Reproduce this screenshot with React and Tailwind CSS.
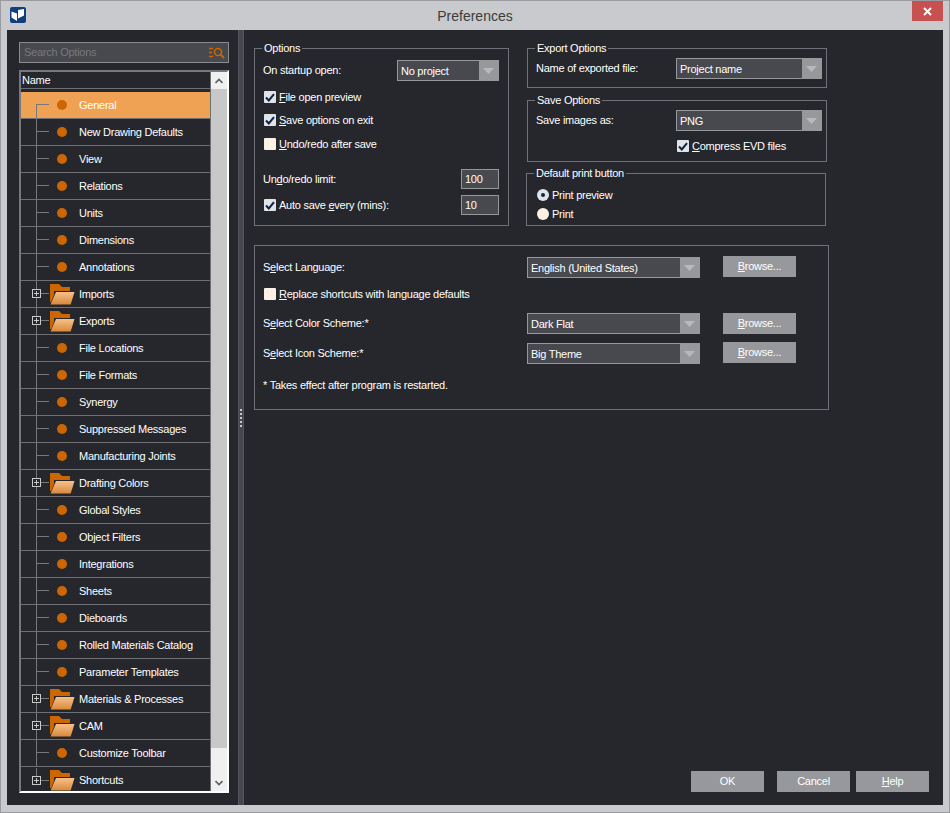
import React from 'react'

const font = "font-['Liberation_Sans',Arial,sans-serif] tracking-[-0.25px]"

const tree = [
  ['General', 'item'],
  ['New Drawing Defaults', 'item'],
  ['View', 'item'],
  ['Relations', 'item'],
  ['Units', 'item'],
  ['Dimensions', 'item'],
  ['Annotations', 'item'],
  ['Imports', 'folder'],
  ['Exports', 'folder'],
  ['File Locations', 'item'],
  ['File Formats', 'item'],
  ['Synergy', 'item'],
  ['Suppressed Messages', 'item'],
  ['Manufacturing Joints', 'item'],
  ['Drafting Colors', 'folder'],
  ['Global Styles', 'item'],
  ['Object Filters', 'item'],
  ['Integrations', 'item'],
  ['Sheets', 'item'],
  ['Dieboards', 'item'],
  ['Rolled Materials Catalog', 'item'],
  ['Parameter Templates', 'item'],
  ['Materials & Processes', 'folder'],
  ['CAM', 'folder'],
  ['Customize Toolbar', 'item'],
  ['Shortcuts', 'folder'],
]

function Connector({ first, last, folder }) {
  return (
    <svg width="30" height="26" className="shrink-0" shapeRendering="crispEdges">
      <line x1="15.5" x2="15.5" y1={first ? 13 : 0} y2={last ? 13 : 26} stroke="#77787c" />
      <line x1="15" x2="28" y1="12.5" y2="12.5" stroke="#77787c" />
      {folder && (
        <g>
          <rect x="11.5" y="8.5" width="8" height="8" fill="#26272c" stroke="#c9c9c9" />
          <line x1="13" x2="18" y1="12.5" y2="12.5" stroke="#c9c9c9" />
          <line x1="15.5" x2="15.5" y1="10" y2="15" stroke="#c9c9c9" />
        </g>
      )}
    </svg>
  )
}

function FolderIcon() {
  return (
    <svg width="25" height="21" viewBox="0 0 25 21" className="shrink-0">
      <defs>
        <linearGradient id="folderFront" x1="0" x2="0" y1="0" y2="1">
          <stop offset="0" stopColor="#f7c18a" />
          <stop offset="1" stopColor="#d9893c" />
        </linearGradient>
      </defs>
      <path d="M0 0h9l3 3h8v4H0z" fill="#cc6600" />
      <path d="M0 7h4v11H0z" fill="#cc6600" />
      <path d="M5.500 7H25l-4 14H0z" fill="#26272c" />
      <path d="M6 8H24.500l-3.800 12.500H0.500z" fill="url(#folderFront)" />
    </svg>
  )
}

function TreeRow({ label, kind, first, last }) {
  const folder = kind === 'folder'
  return (
    <div className={`flex h-[27px] shrink-0 items-center border-b border-[#6f7073] ${first ? 'bg-[#f0a254]' : ''} ${last ? 'border-b-0' : ''}`}>
      <Connector first={first} last={last} folder={folder} />
      <div className="flex w-[28px] shrink-0 items-center justify-center">
        {folder ? <span className="-ml-[5px]"><FolderIcon /></span> : <span className="-ml-[6px] h-[10px] w-[10px] rounded-full bg-[#cc6600]" />}
      </div>
      <span className="text-[11px] whitespace-nowrap text-white">{label}</span>
    </div>
  )
}

function Scrollbar() {
  return (
    <div className="flex w-[16px] shrink-0 flex-col bg-[#f0f0f0]">
      <div className="flex h-[17px] items-center justify-center">
        <svg width="8" height="6" viewBox="0 0 8 6"><path d="M0.500 5L4 1.500 7.500 5" fill="none" stroke="#606060" strokeWidth="1.600" /></svg>
      </div>
      <div className="h-[659px] bg-[#c8c8c8]" />
      <div className="mt-auto flex h-[17px] items-center justify-center">
        <svg width="8" height="6" viewBox="0 0 8 6"><path d="M0.500 1L4 4.500 7.500 1" fill="none" stroke="#606060" strokeWidth="1.600" /></svg>
      </div>
    </div>
  )
}

function Check({ checked }) {
  return (
    <span className={`flex h-[12px] w-[12px] shrink-0 items-center justify-center rounded-[1px] ${checked ? 'bg-[#dfe3ea]' : 'bg-[#fbf1e4]'}`}>
      {checked && (
        <svg width="10" height="9" viewBox="0 0 10 9"><path d="M1 4.500L3.800 7.500 9 1.200" fill="none" stroke="#12233f" strokeWidth="2" /></svg>
      )}
    </span>
  )
}

function Radio({ checked }) {
  return (
    <span className={`flex h-[12px] w-[12px] shrink-0 items-center justify-center rounded-full ${checked ? 'bg-[#dfe3ea]' : 'bg-[#fbf1e4]'}`}>
      {checked && <span className="h-[4px] w-[4px] rounded-full bg-[#12233f]" />}
    </span>
  )
}

function CheckRow({ checked, u, rest, className = '' }) {
  return (
    <label className={`flex h-[18px] items-center gap-[3px] text-[11px] text-white ${className}`}>
      <Check checked={checked} />
      <span><u>{u}</u>{rest}</span>
    </label>
  )
}

function Select({ value, className = '' }) {
  return (
    <div className={`flex h-[21px] border border-[#97989c] bg-[#48494f] ${className}`}>
      <span className="flex-1 pl-[3px] text-[11px] leading-[20px] text-white">{value}</span>
      <span className="flex w-[19px] items-center justify-center bg-[#97989c]">
        <svg width="11" height="6" viewBox="0 0 11 6"><path d="M0 0h11L5.500 6z" fill="#b8b9bc" /></svg>
      </span>
    </div>
  )
}

function Input({ value }) {
  return (
    <div className="h-[20px] w-[38px] border border-[#97989c] bg-[#48494f] pl-[3px] text-[11px] leading-[18px] text-white">{value}</div>
  )
}

function Group({ title, className = '', children }) {
  return (
    <fieldset className={`border border-[#6f7078] ${className}`}>
      <legend className="ml-[7px] px-[2px] text-[11px] leading-[14px] text-white">{title}</legend>
      {children}
    </fieldset>
  )
}

function Btn({ children, className = '' }) {
  return (
    <button className={`h-[21px] w-[73px] bg-[#97989c] text-center text-[11px] text-white ${className}`}>{children}</button>
  )
}

export default function App() {
  return (
    <div className={`flex h-[813px] w-[950px] flex-col border border-[#9a9b9f] bg-[#c9cacd] ${font}`}>
      {/* Title bar */}
      <div className="relative flex h-[29px] shrink-0 items-center justify-center">
        <svg width="16" height="16" viewBox="0 0 16 16" className="absolute top-[6px] left-[9px]">
          <rect width="16" height="16" rx="2" fill="#0f3f7c" />
          <path d="M1.500 4.500L7 6.500V14L1.500 10.500z" fill="#fff" />
          <path d="M8 3L14 2V8.500L8 11.500z" fill="#fff" />
        </svg>
        <span className="mt-[1px] text-[14px] tracking-normal text-[#3c3c3c]">Preferences</span>
        <button className="absolute top-0 right-[6px] flex h-[20px] w-[31px] items-center justify-center bg-[#c75050]">
          <svg width="9" height="9" viewBox="0 0 9 9"><path d="M1 1l7 7M8 1L1 8" stroke="#fff" strokeWidth="2" /></svg>
        </button>
      </div>

      {/* Body */}
      <div className="mx-[6px] flex min-h-0 flex-1 bg-[#26272c]">
        {/* Left panel */}
        <div className="flex w-[231px] shrink-0 flex-col pt-[12px] pl-[12px]">
          <div className="flex h-[21px] w-[210px] items-center justify-between border border-[#8a8b8f] bg-[#48494f] pr-[3px] pl-[4px]">
            <span className="text-[11px] text-[#77787d]">Search Options</span>
            <svg width="16" height="12" viewBox="0 0 16 12" fill="none" stroke="#cc6600">
              <path d="M0 1.500h4M0 5.500h3M0 9.500h4" strokeWidth="1.600" />
              <circle cx="9" cy="5" r="3.500" strokeWidth="1.600" />
              <path d="M11.500 7.500L15 11" strokeWidth="2" />
            </svg>
          </div>
          <div className="mt-[7px] flex h-[723px] w-[210px] border-2 border-t-[#77787c] border-r-white border-b-white border-l-[#77787c]">
            <div className="flex min-w-0 flex-1 flex-col overflow-hidden border-r border-[#6f7073]">
              <div className="h-[17px] shrink-0 border-b border-[#6f7073] pl-[1px] text-[11px] leading-[16px] text-white">Name</div>
              <div className="mt-[3px] flex flex-col">
                {tree.map(([label, kind], i) => (
                  <TreeRow key={label} label={label} kind={kind} first={i === 0} last={i === tree.length - 1} />
                ))}
              </div>
            </div>
            <Scrollbar />
          </div>
        </div>

        {/* Splitter */}
        <div className="flex w-[6px] shrink-0 flex-col items-center justify-center gap-[2px] border-x border-[#55565f] bg-[#45464e]">
          {[0, 1, 2, 3, 4].map((d) => (
            <span key={d} className="h-[2px] w-[2px] bg-[#c8c8c8]" />
          ))}
        </div>

        {/* Right panel */}
        <div className="flex min-w-0 flex-1 flex-col pt-[11px] pr-[14px] pl-[10px]">
          <div className="flex gap-[18px]">
            <Group title="Options" className="h-[185px] w-[255px]">
              <div className="px-[8px] pt-[5px]">
                <div className="flex h-[21px] items-center justify-between pr-[1px] text-[11px] text-white">
                  <span>On startup open:</span>
                  <Select value="No project" className="w-[102px]" />
                </div>
                <CheckRow checked u="F" rest="ile open preview" className="mt-[7px] pl-[1px]" />
                <CheckRow checked u="S" rest="ave options on exit" className="mt-[5px] pl-[1px]" />
                <CheckRow u="U" rest="ndo/redo after save" className="mt-[6px] pl-[1px]" />
                <div className="mt-[16px] flex h-[20px] items-center justify-between pr-[1px] text-[11px] text-white">
                  <span>Un<u>d</u>o/redo limit:</span>
                  <Input value="100" />
                </div>
                <div className="mt-[6px] flex h-[20px] items-center justify-between pr-[1px] pl-[1px] text-[11px] text-white">
                  <label className="flex items-center gap-[3px]">
                    <Check checked />
                    <span>Auto save <u>e</u>very (mins):</span>
                  </label>
                  <Input value="10" />
                </div>
              </div>
            </Group>

            <div className="flex w-[301px] flex-col">
              <Group title="Export Options" className="h-[47px] w-[300px]">
                <div className="flex items-center justify-between pt-[3px] pr-[4px] pl-[8px] text-[11px] text-white">
                  <span>Name of exported file:</span>
                  <Select value="Project name" className="w-[146px]" />
                </div>
              </Group>
              <Group title="Save Options" className="mt-[5px] h-[69px] w-[300px]">
                <div className="flex items-center justify-between pt-[3px] pr-[4px] pl-[8px] text-[11px] text-white">
                  <span>Save images as:</span>
                  <Select value="PNG" className="w-[146px]" />
                </div>
                <CheckRow checked u="C" rest="ompress EVD files" className="mt-[6px] ml-[149px]" />
              </Group>
              <Group title="Default print button" className="mt-[4px] -ml-[1px] h-[60px] w-[300px]">
                <div className="mt-[6px] flex h-[18px] items-center gap-[3px] pl-[10px] text-[11px] text-white">
                  <Radio checked />
                  <span>Print preview</span>
                </div>
                <div className="mt-[1px] flex h-[18px] items-center gap-[3px] pl-[10px] text-[11px] text-white">
                  <Radio />
                  <span>Print</span>
                </div>
              </Group>
            </div>
          </div>

          {/* Language box */}
          <div className="mt-[19px] h-[165px] w-[575px] border border-[#6f7078] pt-[11px] pr-[32px] pl-[8px] text-[11px] text-white">
            <div className="flex h-[21px] items-center">
              <span className="w-[264px]">S<u>e</u>lect Language:</span>
              <Select value="English (United States)" className="w-[173px]" />
              <Btn className="mb-[2px] ml-[23px]"><u>B</u>rowse...</Btn>
            </div>
            <CheckRow u="R" rest="eplace shortcuts with language defaults" className="mt-[7px] pl-[1px]" />
            <div className="mt-[10px] flex h-[21px] items-center">
              <span className="w-[264px]">S<u>e</u>lect Color Scheme:*</span>
              <Select value="Dark Flat" className="w-[173px]" />
              <Btn className="ml-[23px]"><u>B</u>rowse...</Btn>
            </div>
            <div className="mt-[9px] flex h-[21px] items-center">
              <span className="w-[264px]">S<u>e</u>lect Icon Scheme:*</span>
              <Select value="Big Theme" className="w-[173px]" />
              <Btn className="mb-[2px] ml-[23px]"><u>B</u>rowse...</Btn>
            </div>
            <div className="mt-[12px] leading-[18px]">* Takes effect after program is restarted.</div>
          </div>

          {/* Footer buttons */}
          <div className="mt-auto flex justify-end pb-[13px]">
            <Btn>OK</Btn>
            <Btn className="ml-[13px]">Cancel</Btn>
            <Btn className="ml-[6px]"><u>H</u>elp</Btn>
          </div>
        </div>
      </div>
      <div className="h-[7px] shrink-0" />
    </div>
  )
}
